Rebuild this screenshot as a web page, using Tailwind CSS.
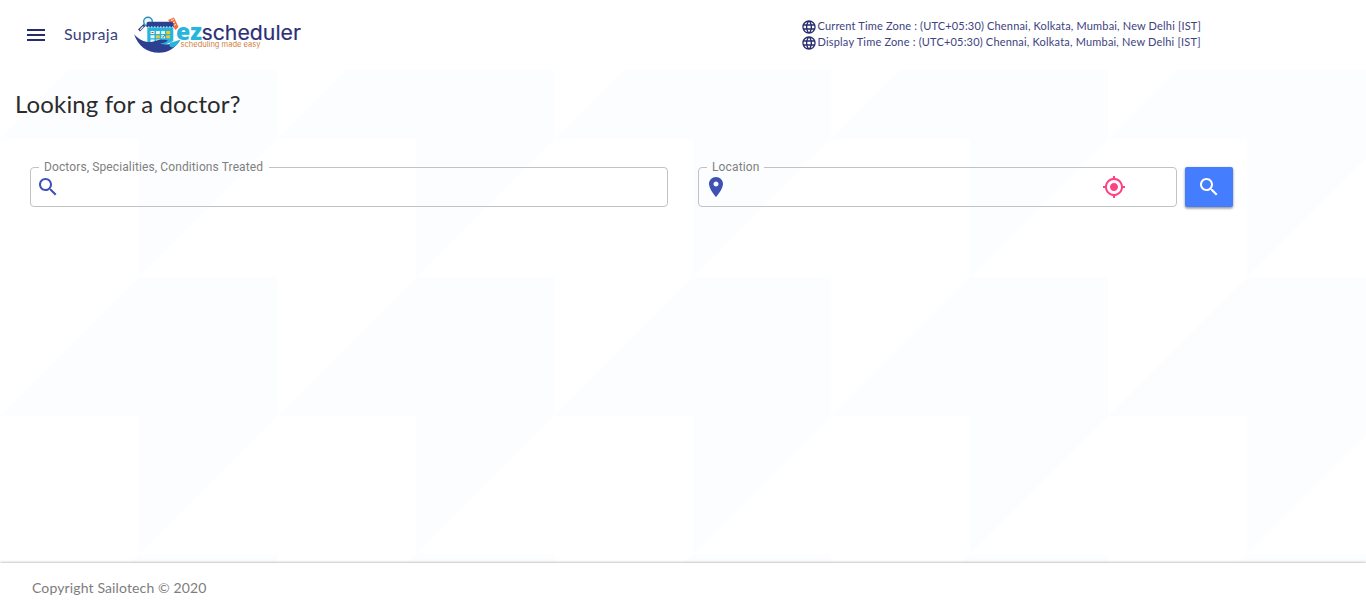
<!DOCTYPE html>
<html lang="en">
<head>
<meta charset="utf-8">
<title>ezscheduler</title>
<script src="https://cdn.jsdelivr.net/npm/@tailwindcss/browser@4"></script>
</head>
<body class="relative flex h-screen flex-col overflow-hidden bg-white font-['Lato',sans-serif]">
<svg class="absolute inset-0 -z-10 size-full" aria-hidden="true">
  <defs>
    <pattern id="tiles" width="277" height="277" patternUnits="userSpaceOnUse">
      <path d="M139 0H277V139L139 277V139H0Z" fill="#fcfdff"/>
    </pattern>
  </defs>
  <rect width="100%" height="100%" fill="url(#tiles)"/>
</svg>

<header class="flex h-[70px] shrink-0 items-center bg-white pl-6 text-[#272c6f]">
  <svg class="size-6" viewBox="0 0 24 24" fill="currentColor"><path d="M3 18h18v-2H3v2zm0-5h18v-2H3v2zm0-7v2h18V6H3z"/></svg>
  <span class="ml-4 w-[70px] pb-[2px] text-base tracking-[0.35px] text-[#3a3f7c]">Supraja</span>
  <svg class="h-[42px] w-[170px]" viewBox="0 0 170 42">
    <!-- magnifier -->
    <path d="M10.500 11l-5.500 5.500" stroke="#2f3e79" stroke-width="2.800"/>
    <path d="M9.300 12.500l-3.300 3.300" stroke="#e4ecf6" stroke-width="1.100"/>
    <circle cx="14" cy="7.600" r="4.300" fill="#e9f8fd" stroke="#2b8fb9" stroke-width="1.400"/>
    <!-- ticket -->
    <path d="M34 6l6-2.500 4.500 9.500-3 3z" fill="#f3713f"/>
    <path d="M37 6.500l3-1m-2 3.500l3-1m-2 3.500l3-1" stroke="#fff" stroke-width=".8"/>
    <!-- calendar -->
    <path d="M13.300 10h26v17l-13 6-13-4z" fill="#27b5de"/>
    <path d="M12.500 9.700q0-2 2-2h22.500q2.500 0 2.500 2v3.300H12.500z" fill="#2d3f91"/>
    <path d="M14 13h25" stroke="#fff" stroke-width="1.200" stroke-dasharray="1.500 1.500"/>
    <path d="M16.500 17h4v3h-4zM22 17h3.800v3h-3.800zM27.200 21.200h3.800v3h-3.800zM16.500 21.200h4v3h-4zM16.500 25.400h4v2.600h-4zM22 25.400h3.800v2h-3.800zM27.200 17h3.800v3h-3.800z" fill="#eef8f3"/>
    <path d="M32.200 17h3.800v3h-3.800zM32.200 21.200h3.800v3h-3.800zM22 21.200h3.800v3h-3.800z" fill="#ecc82a"/>
    <path d="M17.500 18.500h2" stroke="#c9502d"/>
    <path d="M28 22.500l1 1 2-2.500" stroke="#4c5a3a" stroke-width=".9" fill="none"/>
    <!-- hand -->
    <path d="M0 20C5 26 11 28.500 17 28C21 27.500 23 25.800 28 25.800L33.500 26C33.500 28 30 29 26 29.500C31 31.500 38 30.500 46 26C41 34.500 34 38.800 25 38.800C13 38.800 4 32 0 20Z" fill="#2d3f91"/>
    <path d="M36 28.500C40 28 43 27 46.500 25.800C44.500 29.500 42 32 38.500 33.500C35 33 35 31 36 28.500Z" fill="#27b5de"/>
    <text x="42" y="25.500" font-family="Open Sans" font-size="22" font-weight="800" fill="#27b5de" textLength="26" lengthAdjust="spacingAndGlyphs">ez</text>
    <text x="67.500" y="25.500" font-family="Inter" font-size="20.500" font-weight="400" fill="#2b2f78" stroke="#2b2f78" stroke-width=".2" textLength="99.500" lengthAdjust="spacingAndGlyphs">scheduler</text>
    <text x="46.500" y="32.500" font-family="Inter" font-size="7.600" font-weight="400" fill="#cf813f" textLength="80" lengthAdjust="spacingAndGlyphs">scheduling made easy</text>
  </svg>
  <div class="ml-[497px] text-[11px] leading-4">
    <div class="flex items-center"><svg class="size-4" viewBox="0 0 24 24" fill="currentColor"><path d="M11.990 2C6.470 2 2 6.480 2 12s4.470 10 9.990 10C17.520 22 22 17.520 22 12S17.520 2 11.990 2zm6.930 6h-2.950c-.32-1.250-.78-2.450-1.380-3.560 1.840.63 3.370 1.910 4.330 3.560zM12 4.040c.83 1.200 1.480 2.530 1.910 3.960h-3.820c.43-1.430 1.080-2.760 1.910-3.960zM4.260 14C4.100 13.360 4 12.690 4 12s.1-1.360.26-2h3.380c-.08.66-.14 1.320-.14 2s.06 1.340.14 2H4.260zm.82 2h2.950c.32 1.250.78 2.450 1.380 3.560-1.840-.63-3.370-1.900-4.330-3.560zm2.950-8H5.080c.96-1.660 2.490-2.930 4.330-3.560C8.810 5.550 8.350 6.750 8.030 8zM12 19.960c-.83-1.200-1.480-2.530-1.910-3.960h3.820c-.43 1.430-1.080 2.760-1.910 3.960zM14.340 14H9.660c-.09-.66-.16-1.320-.16-2s.07-1.350.16-2h4.680c.09.65.16 1.320.16 2s-.07 1.340-.16 2zm.25 5.560c.6-1.110 1.060-2.310 1.380-3.560h2.950c-.96 1.650-2.490 2.930-4.330 3.560zM16.360 14c.08-.66.14-1.320.14-2s-.06-1.340-.14-2h3.380c.16.64.26 1.310.26 2s-.1 1.360-.26 2h-3.380z"/></svg><span class="pb-[2px] pl-[0.5px] leading-[14px] whitespace-nowrap tracking-[0.17px] text-[#3d4280]">Current Time Zone : (UTC+05:30) Chennai, Kolkata, Mumbai, New Delhi [IST]</span></div>
    <div class="flex items-center"><svg class="size-4" viewBox="0 0 24 24" fill="currentColor"><path d="M11.990 2C6.470 2 2 6.480 2 12s4.470 10 9.990 10C17.520 22 22 17.520 22 12S17.520 2 11.990 2zm6.930 6h-2.950c-.32-1.250-.78-2.450-1.380-3.560 1.840.63 3.370 1.910 4.330 3.560zM12 4.040c.83 1.200 1.480 2.530 1.910 3.960h-3.820c.43-1.430 1.080-2.760 1.910-3.960zM4.260 14C4.100 13.360 4 12.690 4 12s.1-1.360.26-2h3.380c-.08.66-.14 1.320-.14 2s.06 1.340.14 2H4.260zm.82 2h2.950c.32 1.250.78 2.450 1.380 3.560-1.840-.63-3.370-1.900-4.330-3.560zm2.950-8H5.080c.96-1.660 2.490-2.930 4.330-3.560C8.810 5.550 8.350 6.750 8.030 8zM12 19.960c-.83-1.200-1.480-2.530-1.910-3.960h3.820c-.43 1.430-1.080 2.760-1.910 3.960zM14.340 14H9.660c-.09-.66-.16-1.320-.16-2s.07-1.350.16-2h4.680c.09.65.16 1.320.16 2s-.07 1.340-.16 2zm.25 5.560c.6-1.110 1.060-2.310 1.380-3.560h2.950c-.96 1.650-2.490 2.930-4.330 3.560zM16.360 14c.08-.66.14-1.320.14-2s-.06-1.340-.14-2h3.380c.16.64.26 1.310.26 2s-.1 1.360-.26 2h-3.380z"/></svg><span class="pb-[2px] pl-[0.5px] leading-[14px] whitespace-nowrap tracking-[0.19px] text-[#3d4280]">Display Time Zone : (UTC+05:30) Chennai, Kolkata, Mumbai, New Delhi [IST]</span></div>
  </div>
</header>

<main class="flex-1 pt-[18px]">
  <h1 class="pl-[15px] text-2xl leading-8 tracking-[0.13px] text-[#2b2b2b]">Looking for a doctor?</h1>
  <form class="mt-[40px] flex items-start pl-[30px]">
    <fieldset class="h-[47px] w-[638px] rounded-[4px] border border-[#c1c2c3] pl-[8px]">
      <legend class="h-[14px] pr-[6px] pl-[5px] font-['Roboto',sans-serif] text-xs leading-[14px] tracking-[0.11px] text-[#808080]">Doctors, Specialities, Conditions Treated</legend>
      <svg class="mt-[1px] -ml-[3px] size-6 text-[#3f51b5]" viewBox="0 0 24 24" fill="currentColor"><path d="M15.500 14h-.79l-.28-.27C15.410 12.590 16 11.110 16 9.500 16 5.910 13.090 3 9.500 3S3 5.910 3 9.500 5.910 16 9.500 16c1.610 0 3.090-.59 4.230-1.570l.27.28v.79l5 4.990L20.490 19l-4.990-5zm-6 0C7.010 14 5 11.990 5 9.500S7.010 5 9.500 5 14 7.010 14 9.500 11.990 14 9.500 14z"/></svg>
    </fieldset>
    <fieldset class="ml-[30px] h-[47px] w-[479px] rounded-[4px] border border-[#c1c2c3] pl-[8px]">
      <legend class="h-[14px] px-[5px] font-['Roboto',sans-serif] text-xs leading-[14px] tracking-[0.13px] text-[#808080]">Location</legend>
      <div class="mt-[1px] -ml-[3px] flex justify-between pr-[50px]">
        <svg class="size-6 text-[#3f51b5]" viewBox="0 0 24 24" fill="currentColor"><path d="M12 2C8.130 2 5 5.130 5 9c0 5.250 7 13 7 13s7-7.750 7-13c0-3.870-3.130-7-7-7zm0 9.500c-1.380 0-2.500-1.120-2.500-2.500s1.120-2.500 2.500-2.500 2.500 1.120 2.500 2.500-1.120 2.500-2.500 2.500z"/></svg>
        <svg class="size-6 text-[#ff4081]" viewBox="0 0 24 24" fill="currentColor"><path d="M12 8c-2.210 0-4 1.790-4 4s1.790 4 4 4 4-1.790 4-4-1.790-4-4-4zm8.940 3c-.46-4.170-3.770-7.480-7.940-7.940V1h-2v2.060C6.830 3.520 3.520 6.830 3.060 11H1v2h2.060c.46 4.170 3.770 7.480 7.940 7.940V23h2v-2.060c4.170-.46 7.480-3.770 7.940-7.940H23v-2h-2.060zM12 19c-3.870 0-7-3.130-7-7s3.130-7 7-7 7 3.130 7 7-3.130 7-7 7z"/></svg>
      </div>
    </fieldset>
    <button type="button" class="mt-[7px] ml-2 flex h-10 w-12 items-center justify-center rounded-[2px] bg-[#447eff] text-white shadow-[0_1px_3px_rgba(0,0,0,0.35),0_2px_2px_rgba(0,0,0,0.15)]">
      <svg class="size-6" viewBox="0 0 24 24" fill="currentColor"><path d="M15.500 14h-.79l-.28-.27C15.410 12.590 16 11.110 16 9.500 16 5.910 13.090 3 9.500 3S3 5.910 3 9.500 5.910 16 9.500 16c1.610 0 3.090-.59 4.230-1.570l.27.28v.79l5 4.990L20.490 19l-4.990-5zm-6 0C7.010 14 5 11.990 5 9.500S7.010 5 9.500 5 14 7.010 14 9.500 11.990 14 9.500 14z"/></svg>
    </button>
  </form>
</main>

<footer class="flex h-[50px] shrink-0 items-center bg-white pl-8 text-sm tracking-[0.13px] text-[#7d7d7d] shadow-[0_0_3px_rgba(0,0,0,0.4)]">Copyright Sailotech © 2020</footer>
</body>
</html>
